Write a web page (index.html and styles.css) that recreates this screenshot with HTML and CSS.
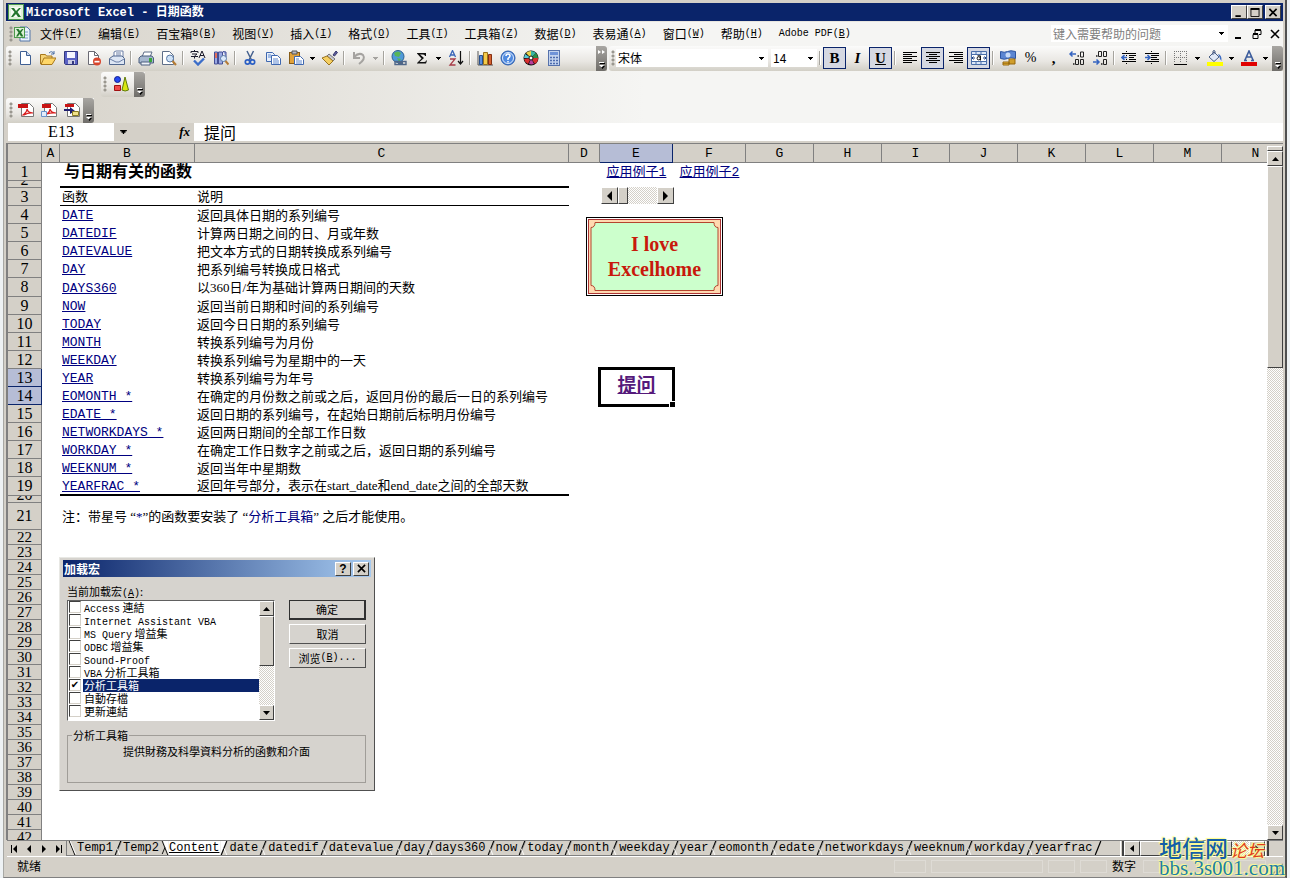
FILE: index.html
```html
<!DOCTYPE html>
<html lang="zh-CN">
<head>
<meta charset="utf-8">
<title>Microsoft Excel - 日期函数</title>
<link rel="stylesheet" href="styles.css">
</head>
<body>
<svg class="defs" aria-hidden="true">
  <symbol id="down" viewBox="0 0 5 3"><path d="M0 0h5v1H4v1H3v1H2V2H1V1H0z"/></symbol>
  <symbol id="slash" viewBox="0 0 9 15"><path d="M3 15L6 7l3 8z" fill="#d4d0c8"/><path d="M1 15L7 0" stroke="#000" stroke-width="1.3"/><path d="M3 8l3 7" stroke="#fff"/><path d="M2 14L8 0" stroke="#808080" stroke-width=".6"/></symbol>
  <symbol id="overflow" viewBox="0 0 7 7"><path d="M2 1h5v1H2zM2 4h5L4.500 7z" fill="#000"/><path d="M1 0h5v1H1zM1 3h5L3.500 5.500z" fill="#fff"/></symbol>
</svg>
<div class="window">
  <header class="titlebar">
    <svg class="app" viewBox="0 0 16 16"><rect x=".5" y=".5" width="15" height="15" fill="#dff0d8" stroke="#4c9a4c"/><path d="M3 3h10v10H3z" fill="#f6fbf3"/><path d="M3 4h3l2 3 3-3h2L9.500 8l3.500 5h-3L8 10l-3 3H3l3.500-5z" fill="#23752c"/></svg>
    <h1>Microsoft Excel - <span class="zh">日期函数</span></h1>
    <div class="captions">
      <button aria-label="最小化"><svg viewBox="0 0 10 10"><path d="M1 8h6v2H1z"/></svg></button>
      <button aria-label="最大化"><svg viewBox="0 0 10 10"><path d="M.5 1.500h9v8h-9z" fill="none" stroke="#000"/><path d="M0 0h10v2H0z"/></svg></button>
      <button class="close" aria-label="关闭"><svg viewBox="0 0 10 10"><path d="M1 1l8 8M9 1L1 9" stroke="#000" stroke-width="1.800"/></svg></button>
    </div>
  </header>

  <div class="menubar">
    <i class="grip"></i>
    <svg class="book" viewBox="0 0 17 16"><path d="M6 1h7l3 3v11H6z" fill="#eaf2fb" stroke="#5577a8"/><path d="M8 6h6M8 9h6M8 12h6" stroke="#7c9cc8"/><rect x=".5" y="1.500" width="10" height="10" fill="#dff0d8" stroke="#4c9a4c"/><path d="M2 3h2.500l1.500 2 2-2h1.500L7 6.500l2.500 4H7L5.500 8 4 10.500H2l2.500-4z" fill="#23752c"/></svg>
    <nav class="menus">
      <button>文件<span>(<u>F</u>)</span></button>
      <button>编辑<span>(<u>E</u>)</span></button>
      <button>百宝箱<span>8(<u>B</u>)</span></button>
      <button>视图<span>(<u>V</u>)</span></button>
      <button>插入<span>(<u>I</u>)</span></button>
      <button>格式<span>(<u>O</u>)</span></button>
      <button>工具<span>(<u>T</u>)</span></button>
      <button>工具箱<span>(<u>Z</u>)</span></button>
      <button>数据<span>(<u>D</u>)</span></button>
      <button>表易通<span>(<u>A</u>)</span></button>
      <button>窗口<span>(<u>W</u>)</span></button>
      <button>帮助<span>(<u>H</u>)</span></button>
      <button><span>Adobe PDF(<u>B</u>)</span></button>
    </nav>
    <label class="ask"><input type="text" placeholder="键入需要帮助的问题" aria-label="帮助问题"><svg class="arrow"><use href="#down"/></svg></label>
    <div class="docbuttons">
      <button aria-label="最小化窗口"><svg viewBox="0 0 10 10"><path d="M1 8h6v2H1z"/></svg></button>
      <button aria-label="还原窗口"><svg viewBox="0 0 10 10"><path d="M3 1.500h6v4H7M3 1v3M1 5.500h5v4H1z" fill="none" stroke="#000"/><path d="M3 0h6v2H3zM1 4h5v2H1z"/></svg></button>
      <button aria-label="关闭窗口"><svg viewBox="0 0 10 10"><path d="M1 1l8 8M9 1L1 9" stroke="#000" stroke-width="1.600"/></svg></button>
    </div>
  </div>

  <div class="toolbars">
    <div class="strip standard">
      <i class="grip"></i>
      <button aria-label="新建"><svg viewBox="0 0 16 16"><path d="M3.500 1.500h6l4 4v9h-10z" fill="#fff" stroke="#3f5f93"/><path d="M9.500 1.500v4h4" fill="#c9d9f0" stroke="#3f5f93"/></svg></button>
      <button aria-label="打开"><svg viewBox="0 0 16 16"><path d="M.5 14V4.500h5l1 1.500H12v3" fill="#f6d477" stroke="#a8781c"/><path d="M1 14.500L4 8h12l-4 6.500z" fill="#ffd768" stroke="#a8781c"/><path d="M9 3q3-3 5 1m0-3v3h-3" fill="none" stroke="#4a6fa5"/></svg></button>
      <button aria-label="保存"><svg viewBox="0 0 16 16"><path d="M1.500 1.500h13v13h-12l-1-1z" fill="#5a62c4" stroke="#33387f"/><path d="M4 2h8v6H4z" fill="#f5f6ff"/><path d="M5 10h7v4H5z" fill="#c9cbe4"/><path d="M9 11h2v3H9z" fill="#33387f"/></svg></button>
      <button aria-label="权限"><svg viewBox="0 0 16 16"><path d="M2.500 1.500h6l4 4v9h-10z" fill="#fff" stroke="#6a6a74"/><path d="M8.500 1.500v4h4" fill="none" stroke="#6a6a74"/><circle cx="11" cy="11.500" r="4" fill="#d8452c"/><path d="M8.500 10.800h5v1.700h-5z" fill="#fff"/></svg></button>
      <button aria-label="邮件"><svg viewBox="0 0 16 16"><path d="M5 7V2l2-1h7v9" fill="#fff" stroke="#6b7fa6"/><path d="M.5 8.500L4 6h9l2.500 2.500v6H.5z" fill="#dde6f4" stroke="#50678f"/><path d="M1 9l6 3h3l5-3M7 3h5M7 5h5" fill="none" stroke="#6b7fa6"/></svg></button>
      <i class="sep"></i>
      <button aria-label="打印"><svg viewBox="0 0 16 16"><path d="M4 7l2-5h8l-2 5z" fill="#fff" stroke="#5e6e88"/><path d="M1 8l2-2h11l1.500 2v5H1z" fill="#a7b8cf" stroke="#4c5f7f"/><path d="M3 12h9v3H3z" fill="#eef2f8" stroke="#4c5f7f"/><path d="M11 8h3v4h-3z" fill="#3aa53a"/></svg></button>
      <button aria-label="打印预览"><svg viewBox="0 0 16 16"><path d="M1.500 1.500h7l4 4v9h-11z" fill="#fff" stroke="#5e6e88"/><circle cx="9" cy="8.500" r="3.500" fill="#cfe2f7" stroke="#5878a4"/><path d="M11.500 11l3.500 4" stroke="#b47b35" stroke-width="2"/></svg></button>
      <i class="sep"></i>
      <button aria-label="拼写检查"><svg viewBox="0 0 16 16"><path d="M1 3V1.500h7V3M4.500 0v2M2 4h5L4.500 6v2.500M1 6.500h7M9 8l3-7 3 7M10 5.500h4" fill="none" stroke="#1a1a2a"/><path d="M4 10.500l4 4 6-6" fill="none" stroke="#3c6ec9" stroke-width="2.400"/></svg></button>
      <button aria-label="信息检索"><svg viewBox="0 0 16 16"><path d="M1.500 2v12h3V2zM5.500 2v12h4V2zM10 1.500l3 .5v5" fill="#9aa8e2" stroke="#444f96"/><path d="M2 3h2v5H2z" fill="#e0705c"/><circle cx="10.500" cy="8.500" r="3" fill="#dbe9fb" stroke="#5878a4"/><path d="M12.500 11l3 3.500" stroke="#b47b35" stroke-width="2"/></svg></button>
      <i class="sep"></i>
      <button aria-label="剪切"><svg viewBox="0 0 16 16"><path d="M5 1l4.500 9M11.500 1L7 10" stroke="#46628f" stroke-width="1.500"/><circle cx="5.500" cy="12" r="2.200" fill="none" stroke="#2b5fc4" stroke-width="1.700"/><circle cx="10.500" cy="12" r="2.200" fill="none" stroke="#2b5fc4" stroke-width="1.700"/></svg></button>
      <button aria-label="复制"><svg viewBox="0 0 16 16"><path d="M1.500 2.500h6l2 2v7h-8z" fill="#e8f0fb" stroke="#3f68b0"/><path d="M6.500 5.500h6l3 3v6h-9z" fill="#fff" stroke="#3f68b0"/><path d="M3 5h3M3 7h3M8 9h5M8 11h6M8 13h6" stroke="#5e88cf"/></svg></button>
      <button aria-label="粘贴"><svg viewBox="0 0 16 16"><rect x="1.500" y="2.500" width="10" height="11" fill="#e2a23a" stroke="#875c17"/><path d="M4 1h5v3H4z" fill="#b9b9c4" stroke="#555"/><path d="M6.500 6.500h6l3 3v5h-9z" fill="#fff" stroke="#3f68b0"/><path d="M8 9h3M8 11h6M8 13h6" stroke="#5e88cf"/></svg></button>
      <button class="drop" aria-label="粘贴选项"><svg class="arrow"><use href="#down"/></svg></button>
      <button aria-label="格式刷"><svg viewBox="0 0 16 16"><path d="M11 5l3-4 1.500 1.500L12.500 6z" fill="#5c5c9c" stroke="#38386c"/><path d="M7 4l6 5-2 2-6-5z" fill="#c8c8d2" stroke="#777"/><path d="M5 6l6 5-4 4L0 8z" fill="#f5cf62" stroke="#9a7420"/></svg></button>
      <i class="sep"></i>
      <button aria-label="撤消"><svg viewBox="0 0 16 16"><path d="M3 2v6h6M3 7q5-5 9-2 3 4-4 9" fill="none" stroke="#a5a3a0" stroke-width="2"/></svg></button>
      <button class="drop off" aria-label="撤消列表"><svg class="arrow"><use href="#down"/></svg></button>
      <i class="sep"></i>
      <button aria-label="超链接"><svg viewBox="0 0 16 16"><circle cx="7" cy="6.500" r="6" fill="#4f9ad8" stroke="#2c5f8f"/><path d="M3 3q4-3 7 0L8 7 4 6zM6 8l4 1-2 3z" fill="#58b558"/><path d="M4 11.500h5v3H4zM10 11.500h5v3h-5zM7 13h5" fill="none" stroke="#4e6688" stroke-width="1.400"/></svg></button>
      <button aria-label="自动求和"><svg viewBox="0 0 16 16"><path d="M3 3h9v3h-1q0-1.500-2-1.500H6l4 3.500-4.500 4H10q2 0 2-1.500h1L12 13.500H3v-.5L7.500 8.500 3 3.500z" fill="#111"/></svg></button>
      <button class="drop" aria-label="求和选项"><svg class="arrow"><use href="#down"/></svg></button>
      <button aria-label="升序排序"><svg viewBox="0 0 16 16"><path d="M1.500 7l3-6.500 3 6.500M2.500 5h4" fill="none" stroke="#3a66b8" stroke-width="1.300"/><path d="M2 9h5l-5 6h5.500" fill="none" stroke="#a83c48" stroke-width="1.300"/><path d="M12.500 1v13M10 11l2.500 3 2.500-3" fill="none" stroke="#111" stroke-width="1.200"/></svg></button>
      <i class="sep"></i>
      <button aria-label="图表向导"><svg viewBox="0 0 16 16"><path d="M1 1v14h15" fill="none" stroke="#555"/><path d="M2.500 5.500h3v9h-3z" fill="#5b8ddb" stroke="#28508e"/><path d="M6.500 2.500h4v12h-4z" fill="#f5cb4a" stroke="#98701c"/><path d="M11.500 4.500h3v10h-3z" fill="#d7622e" stroke="#842f12"/></svg></button>
      <button aria-label="帮助"><svg viewBox="0 0 16 16"><circle cx="8" cy="8" r="7" fill="#4f8ae0" stroke="#2c5caa"/><circle cx="8" cy="8" r="5.500" fill="none" stroke="#dbe8fb"/><path d="M6 6q0-2 2-2t2 2q0 1-2 2.500V10M8 11v1.500" fill="none" stroke="#fff" stroke-width="1.500"/></svg></button>
      <button aria-label="色盘"><svg viewBox="0 0 16 16"><circle cx="8" cy="8" r="7.500" fill="#101010"/><path d="M8 8L3 3a7 7 0 015-2z" fill="#e9d24b"/><path d="M8 8V1a7 7 0 015 2z" fill="#38b6a4"/><path d="M8 8l5-5a7 7 0 012 5z" fill="#2c8c48"/><path d="M8 8h7a7 7 0 01-3 6z" fill="#d82e2e"/><path d="M8 8l3 6a7 7 0 01-5 0z" fill="#b93d9b"/><path d="M8 8l-3 6a7 7 0 01-4-5z" fill="#d82e2e"/><path d="M8 8H1l1-4z" fill="#57c9d7"/><circle cx="8" cy="8" r="2" fill="#fff" stroke="#111"/></svg></button>
      <button aria-label="计算器"><svg viewBox="0 0 16 16"><rect x="2.500" y=".5" width="11" height="15" fill="#c3d3ee" stroke="#5672ac"/><path d="M4 2h8v3H4z" fill="#6f93d8"/><path d="M4 7.500h8M4 10.500h8M4 13.500h8" stroke="#4c6bae" stroke-width="1.500" stroke-dasharray="2 1"/></svg></button>
      <button class="more both" aria-label="工具栏选项"><svg viewBox="0 0 8 5"><path d="M0 0l3 2-3 2zM4 0l3 2-3 2z" fill="#fff"/></svg><svg><use href="#overflow"/></svg></button>
    </div>
    <div class="strip formatting">
      <i class="grip"></i>
      <label class="combo font"><input type="text" value="宋体" aria-label="字体"><svg class="arrow"><use href="#down"/></svg></label>
      <label class="combo size"><input type="text" value="14" aria-label="字号"><svg class="arrow"><use href="#down"/></svg></label>
      <i class="sep"></i>
      <button class="on" aria-pressed="true"><b>B</b></button>
      <button><b><em>I</em></b></button>
      <button class="on" aria-pressed="true"><b><u>U</u></b></button>
      <i class="sep"></i>
      <button aria-label="左对齐"><svg viewBox="0 0 16 16"><path d="M1 2.500h14M1 4.500h9M1 6.500h14M1 8.500h9M1 10.500h14M1 12.500h9" stroke="#000"/></svg></button>
      <button class="on" aria-label="居中"><svg viewBox="0 0 16 16"><path d="M1 2.500h14M4 4.500h8M1 6.500h14M4 8.500h8M1 10.500h14M4 12.500h8" stroke="#000"/></svg></button>
      <button aria-label="右对齐"><svg viewBox="0 0 16 16"><path d="M1 2.500h14M6 4.500h9M1 6.500h14M6 8.500h9M1 10.500h14M6 12.500h9" stroke="#000"/></svg></button>
      <button class="on" aria-label="合并及居中"><svg viewBox="0 0 16 16"><path d="M.5 1.500h15v13H.5z" fill="#dbe7f8" stroke="#4a6ea9"/><path d="M1 4.500h14M1 11.500h14M5 1v3M10 1v3M5 12v3M10 12v3" stroke="#4a6ea9"/><path d="M1 5h14v6H1z" fill="#fff"/><path d="M1 8h3M2.500 6.500L1 8l1.500 1.500M15 8h-3M13.500 6.500L15 8l-1.500 1.500" fill="none" stroke="#1c3e80"/><circle cx="7.700" cy="8.300" r="1.600" fill="none" stroke="#111"/><path d="M6.500 5.800h3v4.700" fill="none" stroke="#111"/></svg></button>
      <i class="sep"></i>
      <button aria-label="货币样式"><svg viewBox="0 0 16 16"><path d="M.5 1.500q4 1.500 7 0t8 0v7q-5-1.500-8 0t-7 0z" fill="#5c86d2" stroke="#2e55a0"/><ellipse cx="8" cy="5" rx="2.500" ry="2.500" fill="#c9dbf7"/><path d="M9 9h6v5H9zM3 12h6v3H3z" fill="#f1bd3c" stroke="#94660e"/><path d="M9 11h6M9 13h6M3 13.500h6" stroke="#94660e" stroke-width=".7"/></svg></button>
      <button class="pct">%</button>
      <button class="pct"><b>,</b></button>
      <button aria-label="增加小数位数"><svg viewBox="0 0 16 16"><path d="M1 4h6M3.500 1.500L1 4l2.500 2.500" fill="none" stroke="#3464c0" stroke-width="1.500"/><path d="M8.500 6h1.500M4 14h1.500" stroke="#222" stroke-width="1.500"/><path d="M11.500 2h3v5h-3zM6.500 9.500h3v5h-3zM11.500 9.500h3v5h-3z" fill="none" stroke="#222"/></svg></button>
      <button aria-label="减少小数位数"><svg viewBox="0 0 16 16"><path d="M1 12h6M4.500 9.500L7 12l-2.500 2.500" fill="none" stroke="#3464c0" stroke-width="1.500"/><path d="M4 6h1.500M9 14h1.500" stroke="#222" stroke-width="1.500"/><path d="M6.500 1.500h3v5h-3zM11.500 1.500h3v5h-3zM11.500 9.500h3v5h-3z" fill="none" stroke="#222"/></svg></button>
      <i class="sep"></i>
      <button aria-label="减少缩进量"><svg viewBox="0 0 16 16"><path d="M1 3.500h14M8 5.500h7M8 7.500h5M8 9.500h7M1 11.500h14" stroke="#000"/><path d="M8 5h7v1H8zM8 9h5v1H8z"/><path d="M5.500 1v13" stroke="#000" stroke-dasharray="1 1"/><path d="M1 7.500h5M3.500 5L1 7.500 3.500 10" fill="none" stroke="#3464c0" stroke-width="1.600"/></svg></button>
      <button aria-label="增加缩进量"><svg viewBox="0 0 16 16"><path d="M1 3.500h14M8 5.500h7M8 7.500h5M8 9.500h7M1 11.500h14" stroke="#000"/><path d="M7.500 1v13" stroke="#000" stroke-dasharray="1 1"/><path d="M1 7.500h5M3.500 5L6 7.500 3.500 10" fill="none" stroke="#3464c0" stroke-width="1.600"/></svg></button>
      <i class="sep"></i>
      <button aria-label="边框"><svg viewBox="0 0 16 16"><path d="M1.500 1v12M7.500 1v12M13.500 1v12M1 1.500h13M1 7.500h13" stroke="#777" stroke-dasharray="1 1"/><path d="M1 14.500h13" stroke="#000"/></svg></button>
      <button class="drop" aria-label="边框选项"><svg class="arrow"><use href="#down"/></svg></button>
      <button aria-label="填充颜色"><svg viewBox="0 0 16 16"><path d="M2 7l5-5 5 5-5 4.500z" fill="#e2eaf8" stroke="#4a5f86"/><path d="M6 5V1q1-1 2 0v3" fill="none" stroke="#4a5f86"/><path d="M11 4q4 1 3.500 7-2-2-2-4z" fill="#3c6cc4"/><path d="M0 12h16v4H0z" fill="#ff0"/></svg></button>
      <button class="drop" aria-label="填充选项"><svg class="arrow"><use href="#down"/></svg></button>
      <button aria-label="字体颜色"><svg viewBox="0 0 16 16"><path d="M4 10L8 1l4 9M5.500 7h5M3 10.500h3M10 10.500h3" fill="none" stroke="#3b5c9c" stroke-width="1.600"/><path d="M0 12h16v4H0z" fill="#e00000"/></svg></button>
      <button class="drop" aria-label="字体颜色选项"><svg class="arrow"><use href="#down"/></svg></button>
      <button class="more last" aria-label="格式工具栏选项"><svg><use href="#overflow"/></svg></button>
    </div>
  </div>
  <div class="toolbars second">
    <div class="strip">
      <i class="grip"></i>
      <button class="wide" aria-label="图示"><svg viewBox="0 0 16 16"><circle cx="4.500" cy="3.500" r="3" fill="#2448f0" stroke="#101c90"/><path d="M1.500 9.500h6v5h-6z" fill="#f04848" stroke="#a01010"/><path d="M12 1l3.500 13q-3.500 2-6.500 0z" fill="#d9e610" stroke="#5f7a08"/></svg></button>
      <button class="more" aria-label="工具栏选项"><svg><use href="#overflow"/></svg></button>
    </div>
  </div>
  <div class="toolbars third">
    <div class="strip">
      <i class="grip"></i>
      <button aria-label="转换为 PDF"><svg viewBox="0 0 16 16"><path d="M3.500 1.500h8l4 4v9h-12z" fill="#fff" stroke="#777"/><path d="M0 2h10v4H0z" fill="#c81414"/><path d="M5 13q4-3 4-6 1 4 6 4-5-.5-9 2z" fill="none" stroke="#d81e1e" stroke-width="1.200"/></svg></button>
      <button aria-label="转换并发送"><svg viewBox="0 0 16 16"><path d="M3.500 1.500h8l4 4v9h-12z" fill="#fff" stroke="#777"/><path d="M1 2h9v4H1z" fill="#c81414"/><path d="M6 12q3-2 3-5 1 4 6 4-5-.5-9 1z" fill="none" stroke="#d81e1e" stroke-width="1.200"/><path d="M.5 9.500h5v5h-5z" fill="#e4eefb" stroke="#6a94cc"/></svg></button>
      <button aria-label="转换并审阅"><svg viewBox="0 0 16 16"><path d="M3.500 1.500h8l4 4v9h-12z" fill="#fff" stroke="#777"/><path d="M1 2h9v3H1z" fill="#c81414"/><path d="M0 7h6V5l5 4-5 3V9H0z" fill="#1f1f70"/><path d="M8.500 9.500h6v4h-6z" fill="#f1e28a" stroke="#8a7a22"/></svg></button>
      <button class="more" aria-label="工具栏选项"><svg><use href="#overflow"/></svg></button>
    </div>
  </div>

  <div class="formulabar">
    <input class="namebox" type="text" value="E13" aria-label="名称框">
    <button class="namedrop" aria-label="名称列表"><svg class="arrow big"><use href="#down"/></svg></button>
    <button class="fx"><i>fx</i></button>
    <input class="formula" type="text" value="提问" aria-label="编辑栏">
  </div>

  <main class="workspace">
    <div class="sheet">
      <table class="grid">
        <colgroup><col class="c-row"><col class="c-a"><col class="c-b"><col class="c-c"><col class="c-d"><col class="c-e"><col class="c-e"><col span="8" class="c-g"></colgroup>
        <thead><tr><th></th><th>A</th><th>B</th><th>C</th><th>D</th><th class="sel">E</th><th>F</th><th>G</th><th>H</th><th>I</th><th>J</th><th>K</th><th>L</th><th>M</th><th>N</th></tr></thead>
        <tbody>
        <tr><th scope="row">1</th><td></td><td colspan="2" class="heading">与日期有关的函数</td><td></td><td class="mid"><a href="#e1">应用例子1</a></td><td class="mid"><a href="#e2">应用例子2</a></td></tr>
        <tr class="thin"><th scope="row"><div class="clip">2</div></th><td></td><td class="thick"></td><td class="thick"></td></tr>
        <tr><th scope="row">3</th><td></td><td class="rule">函数</td><td class="rule">说明</td></tr>
        <tr><th scope="row">4</th><td></td><td><a href="#date">DATE</a></td><td>返回具体日期的系列编号</td></tr>
        <tr><th scope="row">5</th><td></td><td><a href="#datedif">DATEDIF</a></td><td>计算两日期之间的日、月或年数</td></tr>
        <tr><th scope="row">6</th><td></td><td><a href="#datevalue">DATEVALUE</a></td><td>把文本方式的日期转换成系列编号</td></tr>
        <tr><th scope="row">7</th><td></td><td><a href="#day">DAY</a></td><td>把系列编号转换成日格式</td></tr>
        <tr class="tall"><th scope="row">8</th><td></td><td><a href="#days360">DAYS360</a></td><td>以360日/年为基础计算两日期间的天数</td></tr>
        <tr><th scope="row">9</th><td></td><td><a href="#now">NOW</a></td><td>返回当前日期和时间的系列编号</td></tr>
        <tr><th scope="row">10</th><td></td><td><a href="#today">TODAY</a></td><td>返回今日日期的系列编号</td></tr>
        <tr><th scope="row">11</th><td></td><td><a href="#month">MONTH</a></td><td>转换系列编号为月份</td></tr>
        <tr><th scope="row">12</th><td></td><td><a href="#weekday">WEEKDAY</a></td><td>转换系列编号为星期中的一天</td></tr>
        <tr><th scope="row" class="sel">13</th><td></td><td><a href="#year">YEAR</a></td><td>转换系列编号为年号</td><td></td><td rowspan="2" class="active"><a href="#ask">提问</a></td></tr>
        <tr><th scope="row" class="sel">14</th><td></td><td><a href="#eomonth">EOMONTH *</a></td><td>在确定的月份数之前或之后，返回月份的最后一日的系列编号</td></tr>
        <tr><th scope="row">15</th><td></td><td><a href="#edate">EDATE *</a></td><td>返回日期的系列编号，在起始日期前后标明月份编号</td></tr>
        <tr><th scope="row">16</th><td></td><td><a href="#networkdays">NETWORKDAYS *</a></td><td>返回两日期间的全部工作日数</td></tr>
        <tr><th scope="row">17</th><td></td><td><a href="#workday">WORKDAY *</a></td><td>在确定工作日数字之前或之后，返回日期的系列编号</td></tr>
        <tr><th scope="row">18</th><td></td><td><a href="#weeknum">WEEKNUM *</a></td><td>返回当年中星期数</td></tr>
        <tr class="tall"><th scope="row">19</th><td></td><td class="thick"><a href="#yearfrac">YEARFRAC *</a></td><td class="thick">返回年号部分，表示在start_date和end_date之间的全部天数</td></tr>
        <tr class="thin"><th scope="row"><div class="clip">20</div></th></tr>
        <tr class="note"><th scope="row">21</th><td></td><td colspan="2">注：带星号 “<span class="blue">*</span>”的函数要安装了 “<span class="blue">分析工具箱</span>” 之后才能使用。</td></tr>
        </tbody>
        <tbody class="short">
        <tr><th scope="row">22</th></tr><tr><th scope="row">23</th></tr><tr><th scope="row">24</th></tr><tr><th scope="row">25</th></tr><tr><th scope="row">26</th></tr><tr><th scope="row">27</th></tr><tr><th scope="row">28</th></tr><tr><th scope="row">29</th></tr><tr><th scope="row">30</th></tr><tr><th scope="row">31</th></tr><tr><th scope="row">32</th></tr><tr><th scope="row">33</th></tr><tr><th scope="row">34</th></tr><tr><th scope="row">35</th></tr><tr><th scope="row">36</th></tr><tr><th scope="row">37</th></tr><tr><th scope="row">38</th></tr><tr><th scope="row">39</th></tr><tr><th scope="row">40</th></tr><tr><th scope="row">41</th></tr><tr><th scope="row">42</th></tr>
        </tbody>
      </table>

      <div class="spinner">
        <button aria-label="向左"><svg viewBox="0 0 6 10"><path d="M5 0v10L0 5z"/></svg></button>
        <i class="knob"></i><i class="track"></i>
        <button aria-label="向右"><svg viewBox="0 0 6 10"><path d="M0 0v10l5-5z"/></svg></button>
      </div>

      <div class="plaque">
        <svg viewBox="0 0 129 71" preserveAspectRatio="none"><path d="M5 1.500h119q0 5 4 5v58q-4 0-4 5H5q0-5-4-5v-58q4 0 4-5z" fill="#cfc" stroke="#b5442e"/></svg>
        <p>I love<br>Excelhome</p>
      </div>

      <section class="dialog">
        <header><h2>加载宏</h2><button aria-label="帮助">?</button><button aria-label="关闭"><svg viewBox="0 0 10 10"><path d="M1 1l8 8M9 1L1 9" stroke="#000" stroke-width="1.800"/></svg></button></header>
        <div class="body">
          <div class="top">
            <div class="addins">
              <p class="caption">当前加载宏<span>(<u>A</u>)</span>:</p>
              <div class="list">
                <div class="items">
                  <label><input type="checkbox"><span><s>Access</s> 連結</span></label>
                  <label><input type="checkbox"><span><s>Internet Assistant VBA</s></span></label>
                  <label><input type="checkbox"><span><s>MS Query</s> 增益集</span></label>
                  <label><input type="checkbox"><span><s>ODBC</s> 增益集</span></label>
                  <label><input type="checkbox"><span><s>Sound-Proof</s></span></label>
                  <label><input type="checkbox"><span><s>VBA</s> 分析工具箱</span></label>
                  <label class="picked"><input type="checkbox" checked><span>分析工具箱</span></label>
                  <label><input type="checkbox"><span>自動存檔</span></label>
                  <label><input type="checkbox"><span>更新連結</span></label>
                </div>
                <div class="vbar small"><button aria-label="向上"><svg viewBox="0 0 7 4"><path d="M0 4h7L3.500 0z"/></svg></button><i class="thumb"></i><i class="track"></i><button aria-label="向下"><svg viewBox="0 0 7 4"><path d="M0 0h7L3.500 4z"/></svg></button></div>
              </div>
            </div>
            <div class="actions"><button class="default">确定</button><button>取消</button><button>浏览<s>(<u>B</u>)...</s></button></div>
          </div>
          <fieldset><legend>分析工具箱</legend><p>提供財務及科學資料分析的函數和介面</p></fieldset>
        </div>
      </section>
    </div>
    <div class="vbar main">
      <i class="split"></i>
      <button aria-label="向上滚动"><svg viewBox="0 0 7 4"><path d="M0 4h7L3.500 0z"/></svg></button>
      <i class="thumb"></i><i class="track"></i>
      <button aria-label="向下滚动"><svg viewBox="0 0 7 4"><path d="M0 0h7L3.500 4z"/></svg></button>
    </div>
  </main>

  <div class="tabrow">
    <div class="tabnav">
      <button aria-label="第一张"><svg viewBox="0 0 8 8"><path d="M1 0h1v8H1zM7 0v8L3 4z"/></svg></button>
      <button aria-label="上一张"><svg viewBox="0 0 8 8"><path d="M6 0v8L2 4z"/></svg></button>
      <button aria-label="下一张"><svg viewBox="0 0 8 8"><path d="M2 0v8l4-4z"/></svg></button>
      <button aria-label="最后一张"><svg viewBox="0 0 8 8"><path d="M1 0v8l4-4zM6 0h1v8H6z"/></svg></button>
    </div>
    <nav class="tabs">
      <svg class="slant" viewBox="0 0 9 15"><path d="M1 0l6 15" stroke="#000"/><path d="M2 0l6 14" stroke="#fff"/></svg><button>Temp1</button>
      <svg class="slant"><use href="#slash"/></svg><button>Temp2</button>
      <svg class="slant" viewBox="0 0 9 15"><path d="M3 0h6v15z" fill="#fff"/><path d="M2 0l6 15M2 14l3-7" stroke="#000"/></svg><button class="current">Content</button>
      <svg class="slant" viewBox="0 0 9 15"><path d="M0 0h7L1 15H0z" fill="#fff"/><path d="M1 15L7 0" stroke="#000" stroke-width="1.300"/><path d="M4 8l3 7" stroke="#fff"/></svg><button>date</button>
      <svg class="slant"><use href="#slash"/></svg><button>datedif</button>
      <svg class="slant"><use href="#slash"/></svg><button>datevalue</button>
      <svg class="slant"><use href="#slash"/></svg><button>day</button>
      <svg class="slant"><use href="#slash"/></svg><button>days360</button>
      <svg class="slant"><use href="#slash"/></svg><button>now</button>
      <svg class="slant"><use href="#slash"/></svg><button>today</button>
      <svg class="slant"><use href="#slash"/></svg><button>month</button>
      <svg class="slant"><use href="#slash"/></svg><button>weekday</button>
      <svg class="slant"><use href="#slash"/></svg><button>year</button>
      <svg class="slant"><use href="#slash"/></svg><button>eomonth</button>
      <svg class="slant"><use href="#slash"/></svg><button>edate</button>
      <svg class="slant"><use href="#slash"/></svg><button>networkdays</button>
      <svg class="slant"><use href="#slash"/></svg><button>weeknum</button>
      <svg class="slant"><use href="#slash"/></svg><button>workday</button>
      <svg class="slant"><use href="#slash"/></svg><button>yearfrac</button>
      <svg class="slant" viewBox="0 0 9 15"><path d="M1 15L7 0" stroke="#000" stroke-width="1.300"/></svg>
    </nav>
    <div class="hbar">
      <i class="split"></i>
      <button aria-label="向左滚动"><svg viewBox="0 0 4 7"><path d="M4 0v7L0 3.500z"/></svg></button>
      <i class="thumb"></i><i class="track"></i>
      <button aria-label="向右滚动"><svg viewBox="0 0 4 7"><path d="M0 0v7l4-3.500z"/></svg></button>
      <i class="split"></i>
    </div>
  </div>

  <footer class="status">
    <span class="ready">就绪</span>
    <i class="pane p32"></i><i class="pane p112"></i><i class="pane p28"></i><i class="pane p28"></i>
    <span class="num">数字</span>
    <i class="pane p28"></i><i class="pane p28"></i><i class="pane p28"></i><i class="pane p28"></i>
    <svg class="resize" viewBox="0 0 12 12"><path d="M1 12L12 1M5 12l7-7M9 12l3-3" stroke="#808080" stroke-width="1.500"/></svg>
  </footer>
  <div class="watermark"><div><strong>地信网</strong><em>论坛</em></div><div class="site">bbs.3s001.com</div></div>
</div>
</body>
</html>
```

FILE: styles.css
```css
* { box-sizing: border-box; }
body { margin: 0; height: 100vh; overflow: hidden; background: #eef2f4; font: 12px "Liberation Serif", "Noto Sans CJK SC", serif; color: #000; }
button, input { font: inherit; color: inherit; margin: 0; padding: 0; border: 0; border-radius: 0; background: none; min-width: 0; outline: 0; }
button { display: flex; align-items: center; justify-content: center; }
h1, h2, p { margin: 0; }
s { text-decoration: none; }
svg { display: block; flex: none; }
.defs { position: absolute; width: 0; height: 0; }

.window { position: relative; display: flex; flex-direction: column; height: 100vh; margin: 0 3px; padding: 3px 2px 2px; background: #d4d0c8; border-left: 1px solid #a8a8a4; border-right: 2px solid #505050; border-bottom: 1px solid #808080; }

.titlebar { display: flex; align-items: center; height: 18px; flex: none; padding: 0 2px; background: #0a246a; color: #fff; }
.app { width: 16px; height: 16px; }
h1 { flex: 1; padding: 2px 0 0 2px; font: bold 12px/16px "Liberation Mono", "Noto Sans CJK SC", monospace; white-space: pre; }
.captions { display: flex; }
.captions button, .dialog header button { width: 16px; height: 14px; background: #d4d0c8; border: 1px solid; border-color: #fff #404040 #404040 #fff; }
.captions .close { margin-left: 2px; }
.captions svg { width: 10px; height: 9px; }

.menubar { display: flex; align-items: center; height: 24px; flex: none; padding-left: 2px; background: linear-gradient(90deg, #d6d2c9, #f5f5f3 50%); border-top: 1px solid #e8e6e0; }
.grip { width: 6px; height: 16px; flex: none; background: radial-gradient(circle at 3px 2px, #9a978f 1px, transparent 2px) 0 0 / 6px 4px; }
.book { width: 17px; height: 16px; }
.menus { display: flex; flex: 1; padding-left: 1px; }
.menus button { padding: 0 8px; font: 12px/20px "Noto Sans CJK SC", sans-serif; white-space: pre; }
.menus span { font: 10px/20px "Liberation Mono", monospace; }
.ask { display: flex; align-items: center; width: 177px; height: 17px; background: #fff; }
.ask input { flex: 1; padding-left: 2px; font: 12px/16px "Noto Sans CJK SC", sans-serif; }
.ask input::placeholder { color: #808080; }
.arrow { width: 5px; height: 3px; margin: 0 4px; }
.arrow.big { width: 7px; height: 4px; }
.docbuttons { display: flex; gap: 8px; padding: 0 3px 0 6px; }
.docbuttons svg { width: 10px; height: 10px; }

.toolbars { display: flex; flex: none; height: 26px; align-items: center; background: linear-gradient(90deg, #d6d2c9, #f5f5f3 50%); }
.strip { display: flex; align-items: center; height: 25px; padding-left: 1px; background: linear-gradient(#fbfbfa, #e9e7e3 60%, #d2cfc6); border-radius: 3px 0 0 3px; }
.strip button { width: 23px; height: 22px; flex: none; }
.strip button > svg { width: 16px; height: 16px; }
.strip button > .arrow { width: 5px; height: 3px; margin: 0; }
.standard { width: 601px; flex: none; }
.formatting { flex: 1; min-width: 0; margin-left: 2px; }
.strip .drop { width: 11px; }
.strip .off { fill: #a5a3a0; }
.strip .wide { width: 26px; }
.sep { width: 2px; height: 14px; flex: none; margin: 0 2px; border-left: 1px solid #a6a49e; border-right: 1px solid #fff; }
.strip .on { border: 1px solid #0a246a; background: #d5d8e2; }
.strip b { font: bold 15px/18px "Liberation Serif", serif; }
.strip b em { font-style: italic; }
.strip .pct { font: 14px/18px "Liberation Serif", serif; }
.strip .more { width: 11px; height: 25px; align-items: flex-end; padding-bottom: 2px; border-radius: 0 3px 3px 0; background: linear-gradient(#a8a6a2, #6f6d69); }
.strip .more > svg { width: 7px; height: 7px; }
.strip .both { flex-direction: column; align-items: center; justify-content: space-between; padding-top: 4px; margin-left: auto; }
.strip .both > svg:first-child { width: 8px; height: 5px; }
.strip .last { margin-left: auto; }
.combo { display: flex; align-items: center; height: 18px; background: #fff; margin-right: 3px; flex: none; }
.combo input { flex: 1; height: 18px; padding: 0 0 2px 2px; font: 12px/16px "Noto Sans CJK SC", sans-serif; }
.combo .arrow { margin: 0 4px; }
.font { width: 152px; }
.size { width: 46px; margin-right: 0; }
.second { padding-left: 95px; }
.third .strip { padding-left: 2px; }

.formulabar { display: flex; flex: none; height: 21px; padding: 0 0 2px 2px; background: #d4d0c8; border-bottom: 1px solid #808080; }
.namebox { width: 106px; background: #fff; text-align: center; font-family: "Liberation Serif", serif; font-size: 16px; }
.namedrop { width: 18px; }
.fx { flex: none; width: 62px; justify-content: flex-end; padding-right: 4px; font: bold 13px/16px "Liberation Serif", serif; }
.formula { flex: 1; background: #fff; padding-left: 10px; font: 16px/18px "Noto Sans CJK SC", sans-serif; }

.workspace { display: flex; flex: 1; min-height: 0; background: #fff; border-left: 2px solid #808080; }
.sheet { position: relative; flex: 1; min-width: 0; overflow: hidden; }
.grid { table-layout: fixed; width: 1282px; border-spacing: 0; font-size: 13px; }
.c-row { width: 34px; } .c-a { width: 18px; } .c-b { width: 135px; } .c-c { width: 374px; } .c-d { width: 31px; } .c-e { width: 73px; } .c-g { width: 68px; }
.grid th { padding: 0; background: #d4d0c8; border-right: 1px solid #808080; border-bottom: 1px solid #808080; font: 16px/14px "Liberation Serif", serif; }
.grid thead th { height: 19px; padding-top: 2px; font: 13px/16px "Liberation Mono", monospace; }
.grid th.sel { background: #b6bdd6; border-color: #0a246a; }
.grid tr { height: 18px; }
.grid .thin { height: 7px; }
.grid .tall { height: 19px; }
.grid .note { height: 27px; }
.short tr { height: 15px; }
.short th { font-size: 15px; }
.clip { display: flex; align-items: flex-end; justify-content: center; height: 6px; overflow: hidden; }
.grid td { padding: 0 2px; line-height: 15px; white-space: nowrap; }
.grid .mid { text-align: center; padding: 0; }
.grid a { color: #000080; font-family: "Liberation Mono", "Noto Sans CJK SC", monospace; }
.grid .heading { padding-left: 4px; font-weight: bold; font-size: 16px; line-height: 16px; }
.grid .thick { border-bottom: 2px solid #000; }
.grid .rule { border-bottom: 1px solid #000; }
.grid .thin td { line-height: 0; }
.blue { color: #000080; }
.grid .active { position: relative; padding: 0; outline: 3px solid #000; outline-offset: -1px; text-align: center; vertical-align: middle; }
.active::after { content: ""; position: absolute; right: -2px; bottom: -2px; width: 5px; height: 5px; background: #000; border-top: 1px solid #fff; border-left: 1px solid #fff; box-sizing: content-box; }
.grid .active a { font-weight: bold; font-size: 19px; line-height: 24px; color: #551a7b; }

.spinner button, .spinner .knob, .vbar button, .vbar .thumb, .vbar .split, .hbar button, .hbar .thumb { background: #d4d0c8; border: 1px solid; border-color: #fff #404040 #404040 #fff; flex: none; }
.track { flex: 1; background: repeating-conic-gradient(#d4d0c8 0 25%, #fff 0 50%) 0 0 / 2px 2px; }
.spinner { position: absolute; left: 593px; top: 43px; display: flex; width: 73px; height: 17px; }
.spinner button { width: 17px; }
.spinner .knob { width: 10px; }
.spinner svg { width: 6px; height: 10px; }

.plaque { position: absolute; left: 578px; top: 73px; width: 137px; height: 79px; padding: 1px; border: 1px solid #000; background: #fff; }
.plaque svg { width: 100%; height: 75px; padding: 1px; border: 1px solid #a33; background: #ffd9b0; }
.plaque p { position: absolute; inset: 14px 0 auto; text-align: center; font: bold 20px/25px "Liberation Serif", serif; color: #c8190c; }

.dialog { position: absolute; left: 51px; top: 413px; width: 316px; padding: 2px 3px 3px; background: #d6d3ce; border: 1px solid; border-color: #e8e8e4 #505050 #505050 #e8e8e4; font: 11px/13px "Noto Sans CJK SC", sans-serif; }
.dialog header { display: flex; align-items: center; height: 17px; padding: 0 2px 0 1px; background: linear-gradient(90deg, #0a246a, #a6caf0); }
.dialog h2 { flex: 1; font-size: 12px; line-height: 16px; color: #fff; }
.dialog header button { font: bold 12px/12px "Liberation Sans", sans-serif; }
.dialog header button + button { margin-left: 2px; }
.dialog header svg { width: 9px; height: 9px; }
.dialog s, .caption span { font: 10px/12px "Liberation Mono", monospace; }
.dialog .body { padding: 7px 5px 4px 4px; }
.top { display: flex; gap: 14px; }
.caption { line-height: 15px; }
.list { display: flex; width: 208px; height: 121px; background: #fff; border: 1px solid; border-color: #606060 #fff #fff #606060; }
.items { flex: 1; padding-left: 1px; }
.items label { display: flex; height: 13px; gap: 2px; white-space: pre; }
.items span { flex: 1; padding-left: 1px; line-height: 12px; }
.items input { appearance: none; width: 12px; height: 12px; border: 1px solid; border-color: #404040 #d4d0c8 #d4d0c8 #404040; flex: none; }
.items input:checked::before { content: "✔"; display: block; font: 10px/10px "DejaVu Sans", sans-serif; text-align: center; }
.picked span { background: #0a246a; color: #fff; }
.vbar { display: flex; flex-direction: column; width: 15px; flex: none; }
.vbar button { width: 100%; height: 15px; }
.vbar svg { width: 7px; height: 4px; }
.small .thumb { height: 50px; }
.actions { display: flex; flex-direction: column; gap: 4px; width: 77px; padding-top: 16px; }
.actions button { height: 20px; border: 1px solid; border-color: #fff #505050 #505050 #fff; white-space: pre; }
.actions .default { border: 2px solid #303030; border-width: 1px 2px 2px 1px; }
fieldset { margin: 8px 0 0; padding: 3px 4px; height: 54px; border: 1px solid #a09d98; min-width: 0; }
legend { padding: 0 1px; }
fieldset p { text-align: center; }

.main .split { height: 5px; }
.main { padding: 2px 0 0; background: #d4d0c8; width: 16px; }
.main .thumb { height: 202px; }

.tabrow { display: flex; flex: none; height: 17px; margin-left: 1px; border-top: 1px solid #808080; border-bottom: 1px solid #fff; }
.tabnav { display: flex; width: 60px; flex: none; border-right: 1px solid #808080; }
.tabnav button { width: 15px; }
.tabnav svg { width: 8px; height: 8px; }
.tabs { display: flex; flex: 1; min-width: 0; overflow: hidden; padding-left: 1px; border-bottom: 1px solid #808080; }
.tabs button { font: 12px/14px "Liberation Mono", monospace; height: 14px; padding-right: 1px; }
.slant { width: 9px; height: 14px; fill: none; }
.tabs .current { background: #fff; text-decoration: underline; }
.hbar { display: flex; width: 163px; flex: none; padding-right: 14px; }
.hbar button { width: 16px; }
.hbar svg { width: 4px; height: 7px; }
.hbar .thumb { width: 92px; }
.hbar .split { width: 4px; border-left: 1px solid #fff; border-right: 2px solid #404040; }

.status { display: flex; align-items: center; flex: none; height: 18px; gap: 5px; padding-left: 11px; font: 12px/16px "Noto Sans CJK SC", sans-serif; }
.ready { flex: 1; }
.pane { height: 13px; border: 1px solid #dedbd5; }
.p32 { width: 32px; } .p112 { width: 112px; } .p28 { width: 27px; }
.num { width: 26px; }
.resize { width: 12px; height: 12px; align-self: flex-end; }

.watermark { position: absolute; right: 0; bottom: 0; font: 21px/17px "Liberation Serif", "Noto Sans CJK SC", serif; color: #1c7fa8; white-space: nowrap; text-shadow: 0 0 2px #ffff90, 1px 1px 1px #ffff90, -1px -1px 1px #ffff90; }
.watermark div { display: flex; align-items: baseline; }
.watermark strong { font-size: 23px; font-weight: 500; color: #145fa8; }
.watermark em { padding-left: 2px; font-size: 17px; color: #e03a1c; }
```
